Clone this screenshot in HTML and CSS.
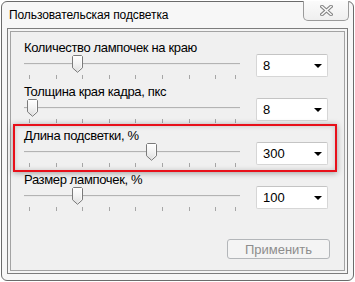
FILE: index.html
```html
<!DOCTYPE html>
<html lang="ru">
<head>
<meta charset="utf-8">
<title>Пользовательская подсветка</title>
<link rel="stylesheet" href="styles.css">
</head>
<body>
<div class="window">
  <div class="titlebar">
    <span class="title">Пользовательская подсветка</span>
    <button class="close" aria-label="Закрыть">
      <svg width="13" height="11" viewBox="0 0 13 11">
        <path d="M2 1.5 L11 9.5 M11 1.5 L2 9.5" stroke="#858585" stroke-width="3.6" stroke-linecap="square" fill="none"/>
        <path d="M2 1.5 L11 9.5 M11 1.5 L2 9.5" stroke="#fbfbfb" stroke-width="1.5" stroke-linecap="square" fill="none"/>
      </svg>
    </button>
  </div>
  <div class="frame">
    <div class="client">
      <div class="row">
        <div class="label">Количество лампочек на краю</div>
        <div class="slider">
          <div class="track"></div>
          <div class="ticks"></div>
          <svg class="thumb" style="left:48px" width="11" height="18" viewBox="0 0 11 18"><use href="#thumb"/></svg>
        </div>
        <div class="combo"><span>8</span><i class="arrow"></i></div>
      </div>
      <div class="row">
        <div class="label">Толщина края кадра, пкс</div>
        <div class="slider">
          <div class="track"></div>
          <div class="ticks"></div>
          <svg class="thumb" style="left:3px" width="11" height="18" viewBox="0 0 11 18"><use href="#thumb"/></svg>
        </div>
        <div class="combo"><span>8</span><i class="arrow"></i></div>
      </div>
      <div class="row">
        <div class="label">Длина подсветки, %</div>
        <div class="slider">
          <div class="track"></div>
          <div class="ticks"></div>
          <svg class="thumb" style="left:122px" width="11" height="18" viewBox="0 0 11 18"><use href="#thumb"/></svg>
        </div>
        <div class="combo"><span>300</span><i class="arrow"></i></div>
      </div>
      <div class="row">
        <div class="label">Размер лампочек, %</div>
        <div class="slider">
          <div class="track"></div>
          <div class="ticks"></div>
          <svg class="thumb" style="left:48px" width="11" height="18" viewBox="0 0 11 18"><use href="#thumb"/></svg>
        </div>
        <div class="combo"><span>100</span><i class="arrow"></i></div>
      </div>
      <div class="actions">
        <button class="apply" disabled>Применить</button>
      </div>
      <div class="highlight"></div>
    </div>
  </div>
</div>
<svg width="0" height="0" class="defs">
  <defs>
    <linearGradient id="tg" x1="0" y1="0" x2="0" y2="1">
      <stop offset="0" stop-color="#ffffff"/>
      <stop offset="0.5" stop-color="#f2f2f2"/>
      <stop offset="1" stop-color="#dcdcdc"/>
    </linearGradient>
    <g id="thumb">
      <path d="M1.5 0.5 H9.5 L10.5 1.5 V12.8 L5.5 17.3 L0.5 12.8 V1.5 Z" fill="url(#tg)" stroke="#7a7a7a" stroke-width="1"/>
      <path d="M1.5 1.5 H9.5 V12.4 L5.5 16" fill="none" stroke="#ffffff" stroke-width="0.8" opacity="0.8"/>
    </g>
  </defs>
</svg>
</body>
</html>
```
FILE: styles.css
```css
* { box-sizing: border-box; }
html, body { margin: 0; padding: 0; background: #ffffff; }
body { font-family: "Liberation Sans", Arial, sans-serif; }

.defs { position: absolute; width: 0; height: 0; }

.window {
  margin: 1px;
  width: 353px;
  height: 280px;
  border: 1px solid #6b6b6b;
  border-radius: 6px;
  background: #f7f7f7;
  display: flex;
  flex-direction: column;
  padding: 0 5px 6px 5px;
}

.titlebar {
  height: 26px;
  display: flex;
  align-items: flex-start;
}
.title {
  font-size: 12px;
  line-height: 26px;
  padding-left: 2px;
  color: #000;
  letter-spacing: -0.1px;
}
.close {
  margin: -1px -1px 0 auto;
  width: 46px;
  height: 20px;
  border: 1px solid #9a9a9a;
  border-top: none;
  border-radius: 0 0 5px 5px;
  background: linear-gradient(#fbfbfb, #efefef);
  display: flex;
  align-items: center;
  justify-content: center;
  padding: 0;
}
.close svg { display: block; }

.frame {
  flex: 1;
  border: 1px solid #7d7d7d;
  padding: 2px;
  background: #f5f5f5;
  display: flex;
}
.client {
  flex: 1;
  position: relative;
  background: #f0f0f0;
  border: 1px solid #a3a3a3;
  padding: 8px 14px 10px 13px;
  display: flex;
  flex-direction: column;
}

.row {
  display: grid;
  grid-template-columns: 216px 72px;
  grid-template-rows: 15px 29px;
  column-gap: 16px;
}
.label {
  grid-column: 1;
  grid-row: 1;
  font-size: 13px;
  line-height: 16px;
  letter-spacing: -0.35px;
  color: #000;
  white-space: nowrap;
}
.slider {
  grid-column: 1;
  grid-row: 2;
  position: relative;
}
.track {
  margin-top: 8px;
  height: 2px;
  border-top: 1px solid #b3b3b3;
  border-bottom: 1px solid #e9e9e9;
  background: #d0d0d0;
}
.ticks {
  position: absolute;
  top: 20px;
  left: 5px;
  width: 188px;
  height: 4px;
  background: repeating-linear-gradient(90deg, #a6a6a6 0 1px, transparent 1px 26.6px);
}
.ticks::after {
  content: "";
  position: absolute;
  left: 206px;
  top: 0;
  width: 1px;
  height: 4px;
  background: #a6a6a6;
}
.thumb {
  position: absolute;
  top: 0;
  display: block;
}

.combo {
  grid-column: 2;
  grid-row: 1 / span 2;
  margin-top: 14px;
  height: 23px;
  background: #ffffff;
  border: 1px solid #d6d6d6;
  border-top-color: #c4c4c4;
  border-radius: 2px;
  display: flex;
  align-items: center;
  padding: 0 5px 0 6px;
  font-size: 13px;
  color: #000;
}
.combo span { flex: 1; }
.arrow {
  width: 0;
  height: 0;
  border-left: 4px solid transparent;
  border-right: 4px solid transparent;
  border-top: 4px solid #000;
  margin-top: 1px;
}

.actions {
  margin-top: 23px;
  display: flex;
  justify-content: flex-end;
}
.apply {
  width: 103px;
  height: 20px;
  border: 1px solid #b3b6b9;
  border-radius: 3px;
  background: #f4f4f4;
  color: #8d8d8d;
  font-family: "Liberation Sans", Arial, sans-serif;
  font-size: 13px;
  padding: 0;
}

.highlight {
  position: absolute;
  left: 2px;
  top: 92px;
  width: 324px;
  height: 48px;
  border: 2px solid #e8101a;
  box-shadow: 0 1px 6px rgba(0, 0, 0, 0.35), inset 0 0 5px rgba(0, 0, 0, 0.18);
  pointer-events: none;
}
```
